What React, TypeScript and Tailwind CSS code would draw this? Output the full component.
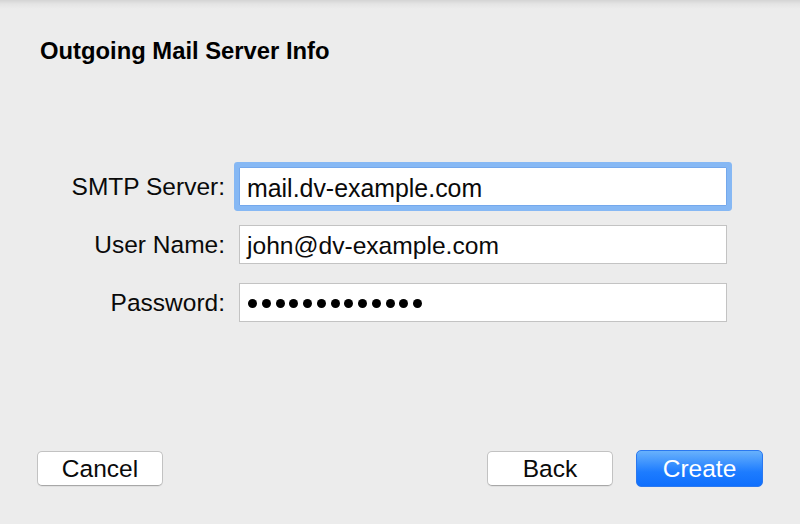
import React from "react";

const font = { fontFamily: '"Liberation Sans", Arial, sans-serif' };

function Dots({ n }: { n: number }) {
  return (
    <div className="flex items-center gap-[4.75px] mt-[2px]">
      {Array.from({ length: n }).map((_, i) => (
        <span key={i} className="block w-[9px] h-[9px] rounded-full bg-black" />
      ))}
    </div>
  );
}

export default function App() {
  return (
    <div
      className="w-[800px] h-[524px] flex flex-col bg-[#ececec] bg-[linear-gradient(to_bottom,#d4d4d4_0px,#e4e4e4_4px,#ececec_9px)] text-[#0a0a0a]"
      style={font}
    >
      <div className="pl-[40px] pt-[37px] text-[23.8px] leading-[28px] font-bold text-black">
        Outgoing Mail Server Info
      </div>

      <div className="mt-[102px] ml-[40px] grid grid-cols-[185px_488px] gap-x-[14px] gap-y-[19px] text-[24.5px] leading-[39px]">
        <div className="text-right h-[39px]">SMTP Server:</div>
        <div className="h-[39px] bg-white border border-[#74a8ec] rounded-[1px] shadow-[0_0_0_5px_#86b8f4] pl-[7px] flex items-center text-[24.9px]">
          <span className="leading-[37px] mt-[3px]">mail.dv-example.com</span>
        </div>

        <div className="text-right h-[39px]">User Name:</div>
        <div className="h-[39px] bg-white border border-[#c3c3c3] pl-[7px] flex items-center text-[24.6px]">
          <span className="leading-[37px] mt-[2px]">john@dv-example.com</span>
        </div>

        <div className="text-right h-[39px]">Password:</div>
        <div className="h-[39px] bg-white border border-[#c3c3c3] pl-[8px] flex items-center">
          <Dots n={13} />
        </div>
      </div>

      <div className="flex-1" />

      <div className="flex items-center px-[37px] pb-[37px] text-[24.5px]">
        <button className="w-[126px] h-[35px] bg-white border border-[#c2c2c2] border-b-[#a8a8a8] rounded-[5px] leading-[33px] text-center text-[#0a0a0a] shadow-[0_1px_0_rgba(0,0,0,0.05)]">
          Cancel
        </button>
        <div className="flex-1" />
        <button className="w-[126px] h-[35px] bg-white border border-[#c2c2c2] border-b-[#a8a8a8] rounded-[5px] leading-[33px] text-center text-[#0a0a0a] shadow-[0_1px_0_rgba(0,0,0,0.05)]">
          Back
        </button>
        <button className="ml-[23px] w-[127px] h-[37px] rounded-[5px] border border-[#2a78f0] bg-[linear-gradient(to_bottom,#68b1fc,#1d7cff_60%,#0f6ffd)] leading-[35px] text-center text-white">
          Create
        </button>
      </div>
    </div>
  );
}
